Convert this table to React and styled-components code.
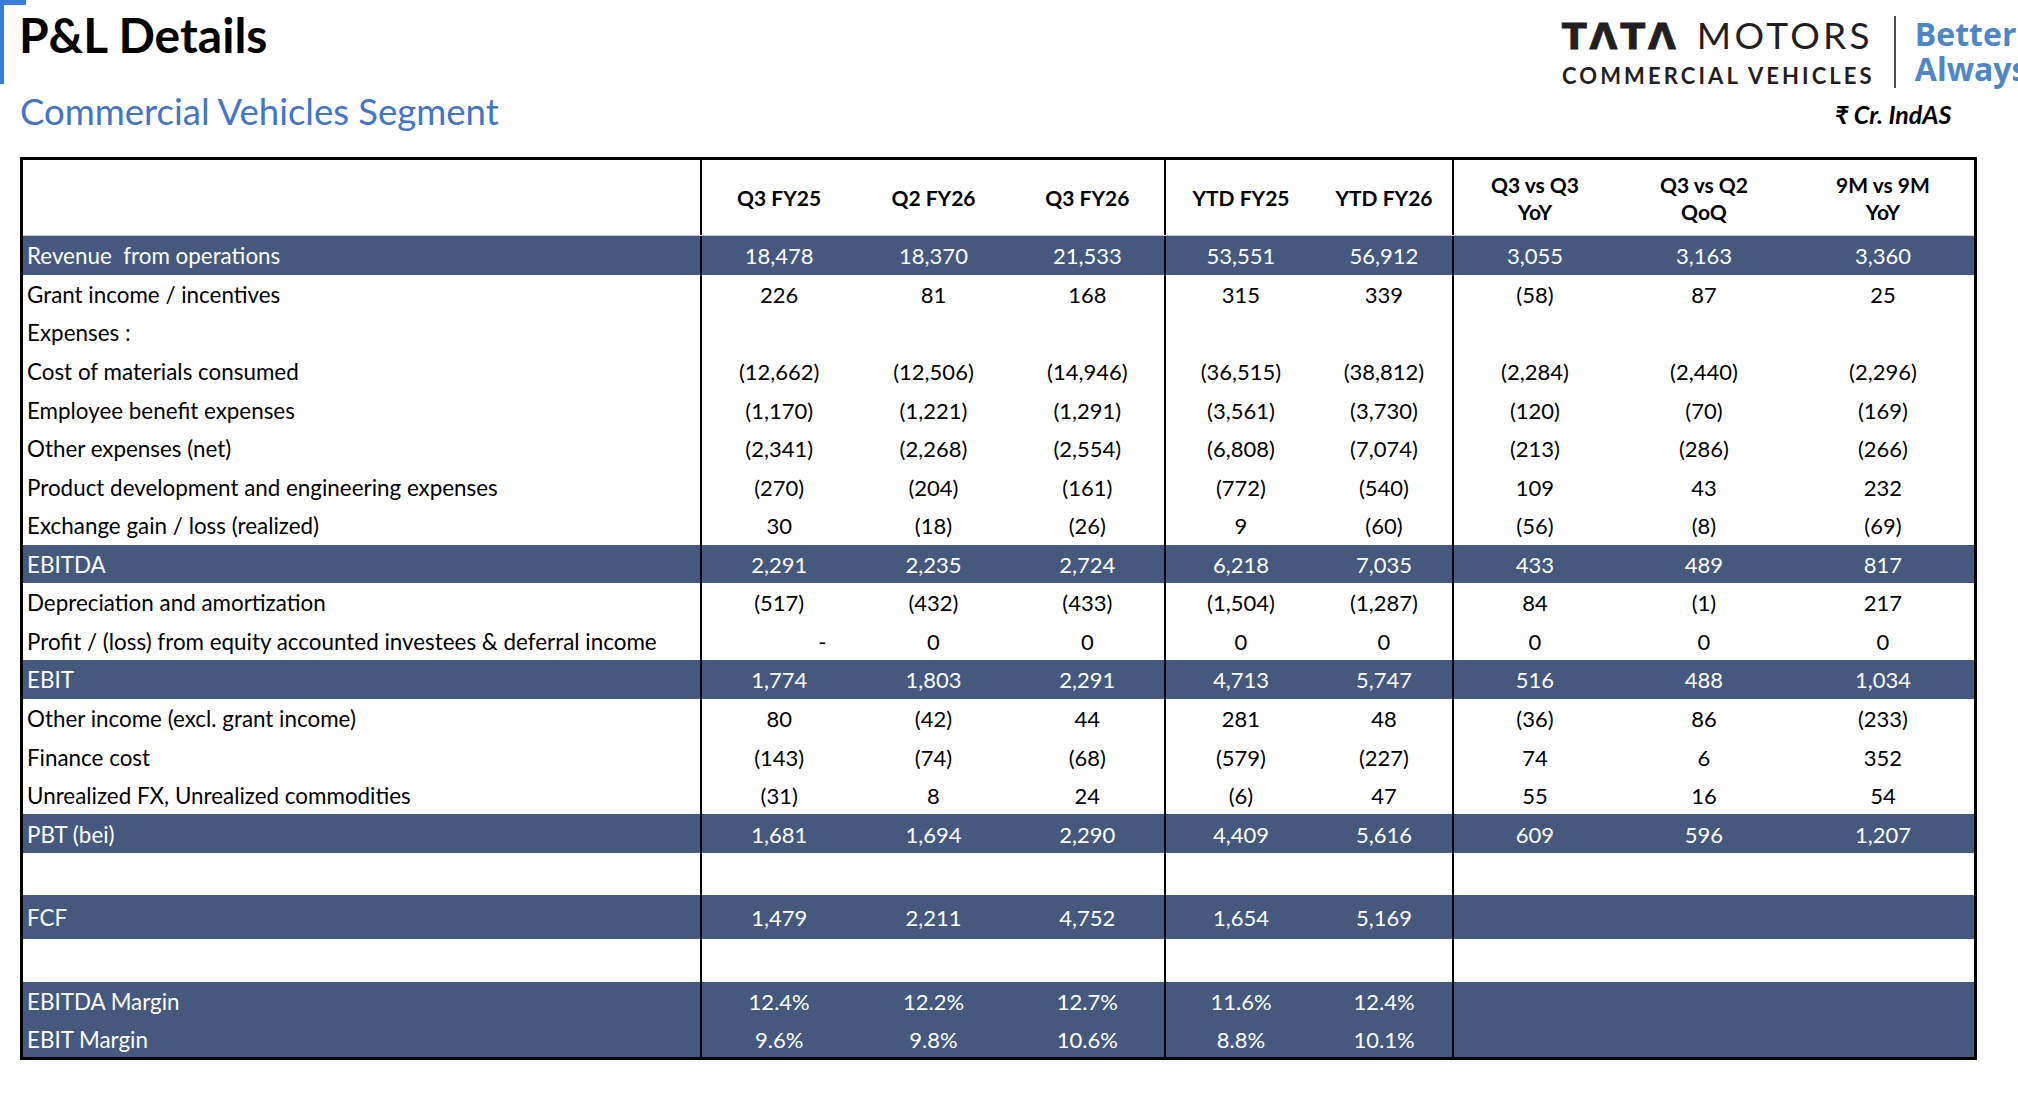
import React from "react";
import styled, { createGlobalStyle } from "styled-components";

const GlobalStyle = createGlobalStyle`
  html, body { margin: 0; padding: 0; background: #ffffff; }
  body { overflow: hidden; }
  * { box-sizing: border-box; }
`;

const NAVY = "#45597f";
const COLS = "677px 156.33px 154.33px 153.34px 152px 136px 164px 176px 182px";
const SEPS = [false, true, false, false, true, false, true, false, false];

const Page = styled.div`
  width: 2018px;
  height: 1096px;
  overflow: hidden;
  background: #fff;
  font-family: Lato, "Noto Sans", sans-serif;
`;

const TopBar = styled.header`
  position: relative;
  display: flex;
  height: 157px;
  &::before {
    content: "";
    position: absolute;
    left: 0;
    top: 0;
    width: 4px;
    height: 84px;
    background: #3b7ddd;
  }
  &::after {
    content: "";
    position: absolute;
    left: 0;
    top: 0;
    width: 26px;
    height: 5px;
    background: #3b7ddd;
  }
`;

const TitleBlock = styled.div`
  flex: 0 0 1562px;
  padding: 7px 0 0 19px;
`;

const Title = styled.h1`
  margin: 0;
  font-family: Lato, sans-serif;
  font-weight: 700;
  font-size: 48px;
  line-height: 56px;
  color: #000;
`;

const Subtitle = styled.h2`
  margin: 26px 0 0 1px;
  font-family: Lato, sans-serif;
  font-weight: 400;
  font-size: 36.5px;
  line-height: 44px;
  color: #4475c6;
`;

const Brand = styled.div`
  flex: 0 0 auto;
  padding-top: 17px;
  display: flex;
  flex-direction: column;
`;

const LogoRow = styled.div`
  display: flex;
  align-items: flex-start;
`;

const Wordmark = styled.div`
  display: flex;
  flex-direction: column;
  color: #231f20;
`;

const WordLine = styled.div`
  display: flex;
  align-items: baseline;
  height: 36px;
  line-height: 36px;
  white-space: nowrap;
`;

const Tata = styled.span`
  font-family: "DejaVu Sans", sans-serif;
  font-weight: 700;
  font-size: 36px;
  letter-spacing: 3px;
  -webkit-text-stroke: 0.9px #231f20;
`;

const Motors = styled.span`
  margin-left: 18px;
  font-family: Lato, sans-serif;
  font-weight: 400;
  font-size: 37px;
  letter-spacing: 3.3px;
`;

const Division = styled.div`
  margin-top: 9.5px;
  font-family: Lato, sans-serif;
  font-weight: 700;
  font-size: 22px;
  line-height: 26px;
  letter-spacing: 3.1px;
  white-space: nowrap;
`;

const Divider = styled.div`
  width: 2px;
  height: 72px;
  margin: -1px 19px 0 19px;
  background: #4d4d4d;
`;

const Tagline = styled.div`
  margin-top: -1px;
  font-family: "Open Sans", sans-serif;
  font-weight: 700;
  font-size: 32px;
  line-height: 35px;
  color: #4f86c6;
  white-space: nowrap;
`;

const UnitNote = styled.div`
  margin: 11px 0 0 273px;
  font-family: Lato, "Noto Sans", sans-serif;
  font-style: italic;
  font-weight: 700;
  font-size: 25px;
  line-height: 29px;
  color: #000;
  white-space: nowrap;
`;

const Table = styled.div`
  width: 1957px;
  margin-left: 20px;
  border: 3px solid #000;
  font-family: Lato, sans-serif;
  font-size: 22px;
`;

const Row = styled.div`
  display: grid;
  grid-template-columns: ${COLS};
  height: ${(p) => p.$h}px;
  background: ${(p) => (p.$hl ? NAVY : "#fff")};
  color: ${(p) => (p.$hl ? "#fff" : "#000")};
`;

const HeadRow = styled(Row)`
  border-bottom: 1px solid #c9c9c9;
`;

const Cell = styled.div`
  display: flex;
  align-items: center;
  justify-content: ${(p) => (p.$label ? "flex-start" : p.$right ? "flex-end" : "center")};
  padding: ${(p) => (p.$label ? "2px 0 0 4px" : p.$right ? "2px 30px 0 0" : "2px 0 0 0")};
  border-left: ${(p) => (p.$sep ? "2px solid #000" : "none")};
  font-size: ${(p) => (p.$label ? "22.4px" : "22px")};
  white-space: nowrap;
  line-height: 26px;
`;

const HeadCell = styled(Cell)`
  padding: 0;
  font-weight: 700;
  font-size: 21px;
  line-height: 27px;
  text-align: center;
`;

const headers = [
  "",
  "Q3 FY25",
  "Q2 FY26",
  "Q3 FY26",
  "YTD FY25",
  "YTD FY26",
  ["Q3 vs Q3", "YoY"],
  ["Q3 vs Q2", "QoQ"],
  ["9M vs 9M", "YoY"],
];

const R = 617 / 16;

const rows = [
  { label: "Revenue \u00a0from operations", v: ["18,478", "18,370", "21,533", "53,551", "56,912", "3,055", "3,163", "3,360"], hl: true },
  { label: "Grant income / incentives", v: ["226", "81", "168", "315", "339", "(58)", "87", "25"] },
  { label: "Expenses :", v: [] },
  { label: "Cost of materials consumed", v: ["(12,662)", "(12,506)", "(14,946)", "(36,515)", "(38,812)", "(2,284)", "(2,440)", "(2,296)"] },
  { label: "Employee benefit expenses", v: ["(1,170)", "(1,221)", "(1,291)", "(3,561)", "(3,730)", "(120)", "(70)", "(169)"] },
  { label: "Other expenses (net)", v: ["(2,341)", "(2,268)", "(2,554)", "(6,808)", "(7,074)", "(213)", "(286)", "(266)"] },
  { label: "Product development and engineering expenses", v: ["(270)", "(204)", "(161)", "(772)", "(540)", "109", "43", "232"] },
  { label: "Exchange gain / loss (realized)", v: ["30", "(18)", "(26)", "9", "(60)", "(56)", "(8)", "(69)"] },
  { label: "EBITDA", v: ["2,291", "2,235", "2,724", "6,218", "7,035", "433", "489", "817"], hl: true },
  { label: "Depreciation and amortization", v: ["(517)", "(432)", "(433)", "(1,504)", "(1,287)", "84", "(1)", "217"] },
  { label: "Profit / (loss) from equity accounted investees & deferral income", v: ["-", "0", "0", "0", "0", "0", "0", "0"] },
  { label: "EBIT", v: ["1,774", "1,803", "2,291", "4,713", "5,747", "516", "488", "1,034"], hl: true },
  { label: "Other income (excl. grant income)", v: ["80", "(42)", "44", "281", "48", "(36)", "86", "(233)"] },
  { label: "Finance cost", v: ["(143)", "(74)", "(68)", "(579)", "(227)", "74", "6", "352"] },
  { label: "Unrealized FX, Unrealized commodities", v: ["(31)", "8", "24", "(6)", "47", "55", "16", "54"] },
  { label: "PBT (bei)", v: ["1,681", "1,694", "2,290", "4,409", "5,616", "609", "596", "1,207"], hl: true },
  { label: "", v: [], h: 42 },
  { label: "FCF", v: ["1,479", "2,211", "4,752", "1,654", "5,169"], hl: true, h: 44 },
  { label: "", v: [], h: 43 },
  { label: "EBITDA Margin", v: ["12.4%", "12.2%", "12.7%", "11.6%", "12.4%"], hl: true, h: 38 },
  { label: "EBIT Margin", v: ["9.6%", "9.8%", "10.6%", "8.8%", "10.1%"], hl: true, h: 37 },
];

export default function App() {
  return (
    <Page>
      <GlobalStyle />
      <TopBar>
        <TitleBlock>
          <Title>P&amp;L Details</Title>
          <Subtitle>Commercial Vehicles Segment</Subtitle>
        </TitleBlock>
        <Brand>
          <LogoRow>
            <Wordmark>
              <WordLine>
                <Tata>TΛTΛ</Tata>
                <Motors>MOTORS</Motors>
              </WordLine>
              <Division>COMMERCIAL VEHICLES</Division>
            </Wordmark>
            <Divider />
            <Tagline>
              Better
              <br />
              Always
            </Tagline>
          </LogoRow>
          <UnitNote>₹ Cr. IndAS</UnitNote>
        </Brand>
      </TopBar>

      <Table>
        <HeadRow $h={76}>
          {headers.map((h, i) => (
            <HeadCell key={i} $sep={SEPS[i]}>
              {Array.isArray(h) ? (
                <span>
                  {h[0]}
                  <br />
                  {h[1]}
                </span>
              ) : (
                h
              )}
            </HeadCell>
          ))}
        </HeadRow>
        {rows.map((r, ri) => (
          <Row key={ri} $hl={r.hl} $h={r.h || R}>
            <Cell $label>{r.label}</Cell>
            {Array.from({ length: 8 }).map((_, ci) => {
              const val = r.v[ci] || "";
              return (
                <Cell key={ci} $sep={SEPS[ci + 1]} $right={val === "-"}>
                  {val}
                </Cell>
              );
            })}
          </Row>
        ))}
      </Table>
    </Page>
  );
}
